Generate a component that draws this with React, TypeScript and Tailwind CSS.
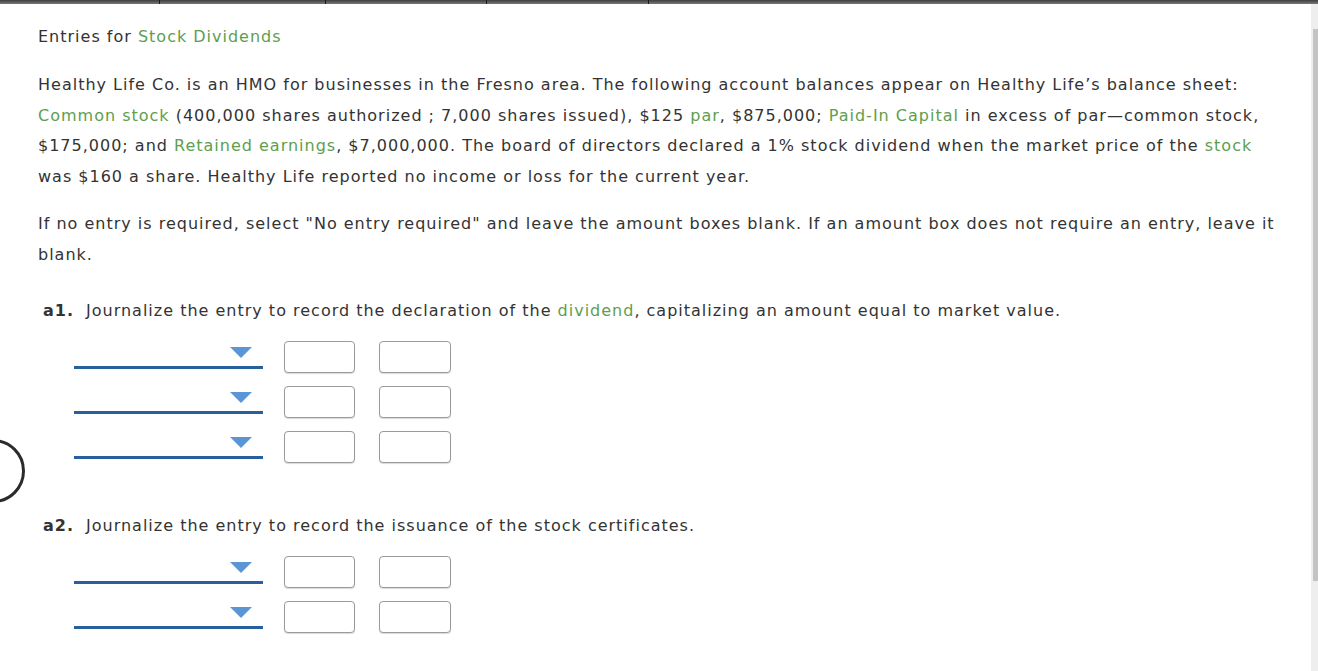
const font = { fontFamily: '"DejaVu Sans", Verdana, sans-serif' };

function Term({ children }: { children: React.ReactNode }) {
  return <span className="text-[#5e9e4e]">{children}</span>;
}

function EntryRow() {
  return (
    <div className="flex h-[45px] items-start">
      <div className="relative h-[28px] w-[189px] border-b-[3px] border-[#285f9d]">
        <div className="absolute right-[11px] top-[6px] h-0 w-0 border-x-[11px] border-t-[11px] border-x-transparent border-t-[#5b95d6]" />
      </div>
      <div className="ml-[21px] h-[32px] w-[71px] rounded-[4px] border border-[#9a9a9a] bg-white shadow-[0_1px_1px_rgba(0,0,0,0.15)]" />
      <div className="ml-[24px] h-[32px] w-[72px] rounded-[4px] border border-[#9a9a9a] bg-white shadow-[0_1px_1px_rgba(0,0,0,0.15)]" />
    </div>
  );
}

function Question({ label, text, rows }: { label: string; text: React.ReactNode; rows: number }) {
  return (
    <div>
      <p className="pl-[5px] leading-[30px]">
        <span className="font-bold">{label}</span>
        <span className="ml-[12px]">{text}</span>
      </p>
      <div className="mt-[15px] pl-[36px]">
        {Array.from({ length: rows }).map((_, i) => (
          <EntryRow key={i} />
        ))}
      </div>
    </div>
  );
}

export default function App() {
  return (
    <div
      className="relative h-[671px] w-[1318px] overflow-hidden bg-white text-[16px] tracking-[1px] text-[#333333]"
      style={font}
    >
      {/* top toolbar strip */}
      <div className="flex h-[4px] bg-gradient-to-b from-[#3e3e3e] to-[#7a7a7a]">
        <div className="w-[160px] border-r border-[#1a1a1a]" />
        <div className="w-[166px] border-r border-[#1a1a1a]" />
        <div className="w-[161px] border-r border-[#1a1a1a]" />
        <div className="w-[162px] border-r border-[#1a1a1a]" />
      </div>

      <div className="flex h-[667px]">
        <div className="flex-1 pl-[38px] pr-[26px]">
          <h1 className="mt-[22px] leading-[22px]">
            Entries for <Term>Stock Dividends</Term>
          </h1>

          <p className="mt-[22px] leading-[30.6px]">
            Healthy Life Co. is an HMO for businesses in the Fresno area. The following account balances appear on Healthy Life’s balance sheet:{" "}
            <Term>Common stock</Term> (400,000 shares authorized ; 7,000 shares issued), $125 <Term>par</Term>, $875,000;{" "}
            <Term>Paid-In Capital</Term> in excess of par—common stock, $175,000; and <Term>Retained earnings</Term>, $7,000,000. The board
            of directors declared a 1% stock dividend when the market price of the <Term>stock</Term> was $160 a share. Healthy Life
            reported no income or loss for the current year.
          </p>

          <p className="mt-[17px] leading-[30.6px]">
            If no entry is required, select "No entry required" and leave the amount boxes blank. If an amount box does not require an
            entry, leave it blank.
          </p>

          <div className="mt-[25px]">
            <Question
              label="a1."
              rows={3}
              text={
                <>
                  Journalize the entry to record the declaration of the <Term>dividend</Term>, capitalizing an amount equal to market value.
                </>
              }
            />
          </div>

          <div className="mt-[35px]">
            <Question label="a2." rows={2} text="Journalize the entry to record the issuance of the stock certificates." />
          </div>
        </div>

        {/* scrollbar */}
        <div className="flex w-[7px] flex-col bg-[#eeeeee]">
          <div className="ml-[2px] mt-[25px] h-[552px] bg-[#c3c3c3]" />
        </div>
      </div>

      {/* partially visible circle on the left edge */}
      <div className="absolute left-[-39px] top-[439px] h-[64px] w-[64px] rounded-full border-[3px] border-[#2b2b2b]" />
    </div>
  );
}
